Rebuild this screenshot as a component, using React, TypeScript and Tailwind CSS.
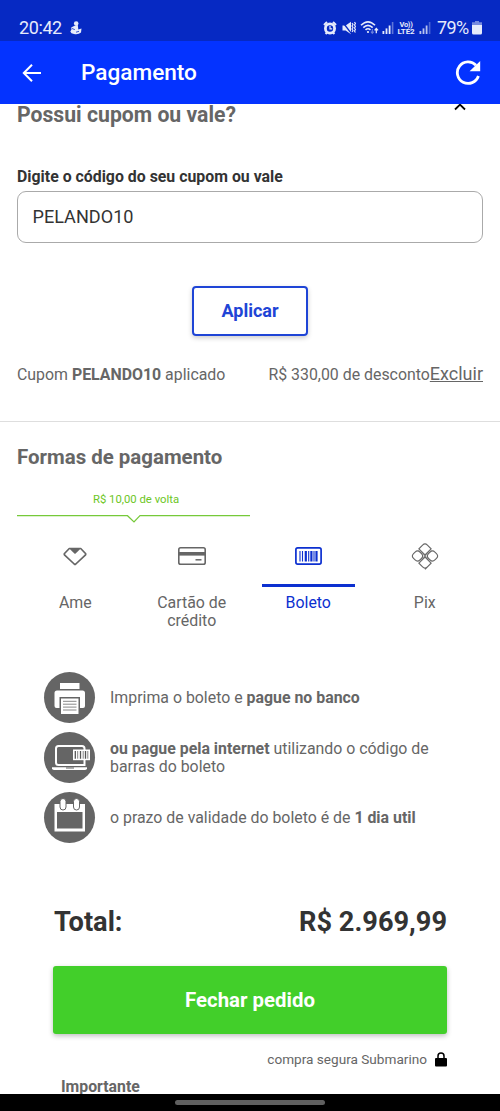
import React from 'react';
import clsx from 'clsx';

interface PaymentMethod {
  id: string;
  label: string;
  icon: React.ReactNode;
}

const SignalIcon: React.FC = () => (
  <svg width="13" height="14" viewBox="0 0 13 14" fill="currentColor">
    <rect x="0.5" y="10" width="1.8" height="3" />
    <rect x="3.6" y="7.4" width="1.8" height="5.6" />
    <rect x="6.7" y="4.5" width="1.8" height="8.5" />
    <rect x="9.8" y="1" width="1.6" height="12" opacity="0.4" />
  </svg>
);

const StatusBar: React.FC = () => (
  <div className="flex h-[41px] shrink-0 items-start bg-[#0629c3] pl-[19px] pr-[18px] pt-[16px] text-[#e6ebfb]">
    <span className="w-[43px] whitespace-nowrap text-[18px] leading-6 tracking-[-0.4px]">20:42</span>
    <svg className="ml-[8px] mt-[5px]" width="12" height="14" viewBox="0 0 12 14" fill="currentColor">
      <circle cx="6.2" cy="2.6" r="2.3" />
      <path d="M3.5 5.2 7.8 4 8.3 8.5 11.5 7.5 11 11.5Q8.5 13.8 4 13Q.8 12.6.3 10.5L1.5 8.5 1.2 6.5Z" />
      <path d="M2 7.5 4.8 8.6M9 10.3 6 11.2" stroke="#0629c3" strokeWidth=".8" />
    </svg>
    <div className="ml-auto flex items-start">
      <svg className="mt-[5px]" width="14" height="14" viewBox="0 0 14 14">
        <circle cx="7" cy="7.5" r="4.6" fill="none" stroke="currentColor" strokeWidth="2.8" />
        <path d="M7 5V7.8H9.2" fill="none" stroke="currentColor" strokeWidth="1.2" />
        <path d="M1 4 4 1M13 4 10 1M2.6 13 4 11.4M11.4 13 10 11.4" stroke="currentColor" strokeWidth="2" />
      </svg>
      <svg className="ml-[5px] mt-[5px]" width="14" height="14" viewBox="0 0 14 14" fill="currentColor">
        <path d="M.5 4.4H3.6L9 .8V13.2L3.6 9.4H.5Z" />
        <path d="M.6 1 9.6 12.8" stroke="#0629c3" strokeWidth="1.3" />
        <path d="M10 2 11 3.5 10 5 11 6.5 10 8 11 9.5 10 11M12.5 1 13.4 2.5 12.5 4 13.4 5.5 12.5 7 13.4 8.5 12.5 10 13.4 11.5" fill="none" stroke="currentColor" strokeWidth="1.2" />
      </svg>
      <svg className="ml-[4px] mt-[4px]" width="19" height="15" viewBox="0 0 19 15" fill="none" stroke="currentColor" strokeWidth="1.6">
        <path d="M1 5.3Q8-1.7 15 5.3M3.3 7.6Q8 3.1 12.7 7.6M5.5 9.9Q8 7.6 10.5 9.9" />
        <circle cx="8" cy="12" r="1.1" fill="currentColor" stroke="none" />
        <path d="M12.3 9V13M10.9 11.7 12.3 13.3 13.7 11.7" opacity=".45" strokeWidth="1.1" />
        <path d="M16.3 13.3V9M14.6 10.4 16.3 8.5 18 10.4" strokeWidth="1.3" />
      </svg>
      <div className="ml-[3px] mt-[5px]">
        <SignalIcon />
      </div>
      <div className="ml-[2px] mt-[5px] flex w-[18px] flex-col items-center whitespace-nowrap text-[8px] font-bold leading-[7px]">
        <span className="text-[7.5px] tracking-[-0.3px]">Vo))</span>
        <span className="tracking-[-0.1px]">LTE2</span>
      </div>
      <div className="ml-[4px] mt-[5px] opacity-80">
        <SignalIcon />
      </div>
      <span className="ml-[5px] w-[33px] whitespace-nowrap text-[18px] leading-6 tracking-[-0.6px]">79%</span>
      <svg className="ml-[2px] mt-[5px]" width="10" height="14" viewBox="0 0 10 14" fill="currentColor">
        <path d="M3 0H7V1.3H10V4H0V1.3H3Z" opacity=".5" />
        <path d="M0 4H10V12Q10 13.5 8.5 13.5H1.5Q0 13.5 0 12Z" />
      </svg>
    </div>
  </div>
);

const AppBar: React.FC = () => (
  <header className="flex h-[63px] shrink-0 items-center bg-[#0433ff] pl-[22px] pr-[19px] text-white">
    <button aria-label="Voltar">
      <svg width="20" height="18" viewBox="0 0 20 18" fill="none" stroke="currentColor" strokeWidth="2">
        <path d="M19 9H2M10 .8 1.8 9 10 17.2" />
      </svg>
    </button>
    <h1 className="ml-[39px] mt-px text-[22.6px] font-medium leading-7">Pagamento</h1>
    <button className="ml-auto" aria-label="Recarregar">
      <svg width="26" height="26" viewBox="0 0 26 26">
        <path d="M21 5.2A10.8 10.8 0 1 0 23.4 16" fill="none" stroke="currentColor" strokeWidth="2.8" />
        <path d="M25.2 1V11.3H14.6Z" fill="currentColor" />
      </svg>
    </button>
  </header>
);

const AmeIcon: React.FC = () => (
  <svg width="24" height="19" viewBox="0 0 24 19">
    <path d="M6.3 1.5H17.7L22.5 6.5Q23 7.3 22.3 8.2L12.8 17Q12 17.7 11.2 17L1.7 8.2Q1 7.3 1.5 6.5Z" fill="none" stroke="currentColor" strokeWidth="1.7" strokeLinejoin="round" />
    <path d="M6.5 1.5H17.5L15.5 3.8 12.6 6.6Q12 7 11.4 6.6L8.5 3.8Z" fill="currentColor" />
  </svg>
);

const CardIcon: React.FC = () => (
  <svg width="28" height="18" viewBox="0 0 28 18">
    <rect x="0.8" y="0.8" width="26.4" height="16.4" rx="1.8" fill="none" stroke="currentColor" strokeWidth="1.6" />
    <path d="M1 6.8H27" stroke="currentColor" strokeWidth="3.6" />
    <path d="M17.5 12.8H23.5" stroke="currentColor" strokeWidth="1.5" />
  </svg>
);

const BarcodeIcon: React.FC = () => (
  <svg width="27" height="18" viewBox="0 0 27 18" fill="none" stroke="currentColor">
    <rect x="0.9" y="0.9" width="25.2" height="16.2" rx="1.8" strokeWidth="1.7" />
    <path d="M5 4V14.5M7.5 4V14.5M13.7 4V14.5M19 4V14.5" strokeWidth="1.1" />
    <path d="M10.8 4V14.5M16.4 4V14.5M21.5 4V14.5" strokeWidth="2.2" />
  </svg>
);

const PixIcon: React.FC = () => (
  <svg width="28" height="28" viewBox="0 0 28 28" fill="none" stroke="currentColor" strokeWidth="1.1">
    <g transform="rotate(45 14 14)">
      <path d="M13.2 13.2H4.6V8Q4.6 4.6 8 4.6H13.2Z" />
      <path d="M23.4 23.4 23.4 14.8 14.8 14.8V23.4H20Q23.4 23.4 23.4 20" />
      <rect x="14.8" y="4.2" width="9" height="9" rx="3.4" />
      <rect x="4.2" y="14.8" width="9" height="9" rx="3.4" />
    </g>
    <path d="M7.5 8.2 13 13.2Q14 14 15 13.2L20.5 8.2M7.5 19.8 13 14.8Q14 14 15 14.8L20.5 19.8" strokeWidth=".8" />
  </svg>
);

const PrinterIcon: React.FC = () => (
  <svg width="51" height="51" viewBox="0 0 51 51">
    <path d="M16 11H35.5V17H16Z" fill="#fff" />
    <path d="M13 18.5H38.5Q41 18.5 41 21V34Q41 36 39 36H36V25H15.5V36H12.5Q10.5 36 10.5 34V21Q10.5 18.5 13 18.5Z" fill="#fff" />
    <path d="M17 26.5H34.5V42H17Z" fill="#fff" />
    <path d="M19 29.3H32.5M19 32.2H32.5M19 35.1H32.5M19 38H32.5" stroke="#888" strokeWidth="1" />
  </svg>
);

const LaptopIcon: React.FC = () => (
  <svg width="51" height="51" viewBox="0 0 51 51">
    <path d="M28 33H14.5Q12 33 12 30.5V16.5Q12 14 14.5 14H38Q40.5 14 40.5 16.5V33H27" fill="none" stroke="#fff" strokeWidth="2" />
    <path d="M8 35.2H43V36.3Q43 38 41 38H10Q8 38 8 36.3Z" fill="#fff" />
    <path d="M22 36H30" stroke="#656565" strokeWidth="1" />
    <rect x="29" y="17.5" width="17" height="10.7" fill="#fff" />
    <path d="M31.3 19V26.7M36.5 19V26.7M41.5 19V26.7" stroke="#555" strokeWidth="1.3" />
    <path d="M33.7 19V26.7M39.2 19V26.7M43.8 19V26.7" stroke="#777" strokeWidth=".9" />
  </svg>
);

const CalendarIcon: React.FC = () => (
  <svg width="51" height="51" viewBox="0 0 51 51">
    <path d="M10.5 12H41V39.5H10.5ZM13 20V36.5H38.5V20Z" fill="#fff" fillRule="evenodd" />
    <rect x="16" y="6.5" width="6" height="11.5" rx="3" fill="#fff" stroke="#656565" strokeWidth="1" />
    <rect x="29.5" y="6.5" width="6" height="11.5" rx="3" fill="#fff" stroke="#656565" strokeWidth="1" />
  </svg>
);

const methods: PaymentMethod[] = [
  { id: 'ame', label: 'Ame', icon: <AmeIcon /> },
  { id: 'card', label: 'Cartão de crédito', icon: <CardIcon /> },
  { id: 'boleto', label: 'Boleto', icon: <BarcodeIcon /> },
  { id: 'pix', label: 'Pix', icon: <PixIcon /> },
];

const instructions = [
  { icon: <PrinterIcon />, text: <>Imprima o boleto e <b>pague no banco</b></> },
  { icon: <LaptopIcon />, text: <><b>ou pague pela internet</b> utilizando o código de barras do boleto</> },
  { icon: <CalendarIcon />, text: <>o prazo de validade do boleto é de <b>1 dia util</b></> },
];

const CouponSection: React.FC = () => (
  <section className="border-b border-[#dedede] px-[17px] pb-[34px]">
    <div className="-mt-[3px] flex items-start justify-between">
      <h2 className="text-[21.2px] font-bold leading-7 text-[#666]">Possui cupom ou vale?</h2>
      <svg className="mr-[17px] mt-[3px]" width="12" height="7" viewBox="0 0 12 7" fill="none" stroke="#000" strokeWidth="1.8">
        <path d="M1 5.5 6 .6 11 5.5" />
      </svg>
    </div>
    <label htmlFor="coupon" className="mt-[38px] block text-[15.87px] font-bold leading-5 text-[#333]">
      Digite o código do seu cupom ou vale
    </label>
    <input
      id="coupon"
      defaultValue="PELANDO10"
      className="mt-[4px] block h-[52px] w-full rounded-[9px] border border-[#aaa] px-[14.5px] pb-[2px] text-[18.1px] text-[#333] outline-none"
    />
    <button className="mx-auto mt-[43px] block h-[50px] w-[116px] rounded-[4px] border-2 border-[#1f45d6] pb-[2px] text-[18px] font-bold text-[#1f45d6] shadow-[0_2px_5px_rgba(0,0,0,0.2)]">
      Aplicar
    </button>
    <div className="mt-[26px] flex items-baseline whitespace-nowrap text-[15.88px] leading-6 text-[#666]">
      <span>Cupom <b>PELANDO10</b> aplicado</span>
      <span className="ml-auto">R$ 330,00 de desconto</span>
      <a className="text-[18px] underline">Excluir</a>
    </div>
  </section>
);

const PaymentMethods: React.FC = () => (
  <section className="px-[17px] pt-[21px] text-[#666]">
    <h2 className="text-[20.45px] font-bold leading-7">Formas de pagamento</h2>
    <p className="mt-[21px] w-[238px] text-center text-[11.3px] leading-4 text-[#6cc624]">R$ 10,00 de volta</p>
    <svg className="mt-[5px] block" width="233" height="12" viewBox="0 0 233 12" fill="none" stroke="#76c93a" strokeWidth="1.2">
      <path d="M0 2.7H110.5L117 9L123 2.7H233" />
    </svg>
    <div className="mt-[17px] grid grid-cols-4">
      {methods.map((method) => (
        <button
          key={method.id}
          className={clsx('flex flex-col items-center', method.id === 'boleto' && 'text-[#0c30d0]')}
        >
          <span className="flex h-[28px] items-center">{method.icon}</span>
          <span className={clsx('mt-[14px] h-[3px] w-[93px]', method.id === 'boleto' && 'bg-[#0c30d0]')}></span>
          <span className="mt-[7px] w-[80px] text-[15.9px] leading-[18px]">{method.label}</span>
        </button>
      ))}
    </div>
  </section>
);

const App: React.FC = () => (
  <div className="flex h-[1111px] w-[500px] flex-col overflow-hidden bg-white font-['Roboto',sans-serif]">
    <StatusBar />
    <AppBar />
    <main className="min-h-0 flex-1 overflow-hidden">
      <CouponSection />
      <PaymentMethods />
      <ul className="ml-[44px] mt-[42px] flex flex-col gap-[9px] text-[#666]">
        {instructions.map((item, index) => (
          <li key={index} className="flex items-center">
            <span className="h-[51px] w-[51px] shrink-0 rounded-full bg-[#656565]">{item.icon}</span>
            <p className="ml-[15px] w-[335px] text-[15.88px] leading-[18px]">{item.text}</p>
          </li>
        ))}
      </ul>
      <section className="mt-[61px] px-[53px]">
        <div className="flex justify-between pl-px text-[27.2px] font-bold leading-9 text-[#333]">
          <span>Total:</span>
          <span>R$ 2.969,99</span>
        </div>
        <button className="mt-[26px] block h-[68px] w-full rounded-[3px] bg-[#42cf2a] text-[20.4px] font-bold text-white shadow-[0_2px_5px_rgba(0,0,0,0.25)]">
          Fechar pedido
        </button>
        <p className="mt-[16px] flex items-center justify-end text-[13.6px] leading-[18px] text-[#666]">
          compra segura Submarino
          <svg className="ml-[8px]" width="12" height="15" viewBox="0 0 12 15">
            <path d="M3 7V4Q3 1 6 1T9 4V7" fill="none" stroke="#000" strokeWidth="1.5" />
            <rect y="6" width="12" height="8.5" rx="1" fill="#000" />
          </svg>
        </p>
        <h3 className="ml-[8px] mt-[9px] text-[15.8px] font-bold leading-5 text-[#666]">Importante</h3>
      </section>
    </main>
    <div className="flex h-[17px] shrink-0 items-center justify-center bg-black">
      <span className="h-[5px] w-[150px] rounded-full bg-[#606060]"></span>
    </div>
  </div>
);

export default App;
